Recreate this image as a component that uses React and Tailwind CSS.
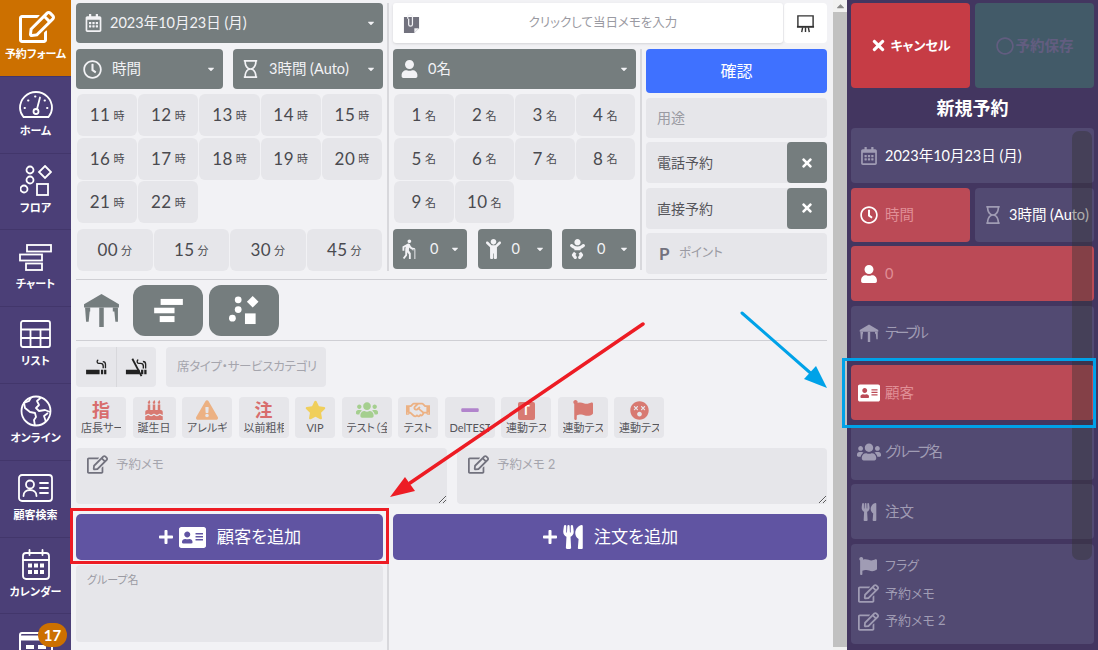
import {
  FaRegCalendarAlt, FaRegClock, FaRegHourglass, FaUser, FaTimes, FaRegEdit, FaStar, FaExclamationTriangle,
  FaBirthdayCake, FaFlag, FaRegHandshake, FaUtensils, FaUsers, FaAddressCard, FaPlus,
  FaDizzy, FaMinus, FaChild, FaBaby, FaCaretDown, FaCaretUp, FaRegCircle,
} from "react-icons/fa";
import { MdElderly } from "react-icons/md";

const TableIcon = ({ className }) => (
  <svg viewBox="0 0 36 33" className={className} fill="currentColor">
    <path d="M18 1 35 11v3H1v-3z" />
    <path d="M2 14h5v4H6.500L5.500 28H3zM29 14h5v14h-2.500l-1-10H29zM15.800 14h4.400v19h-4.400z" />
  </svg>
);

const GanttIcon = ({ className, outline }) => (
  <svg viewBox="0 0 33 27" className={className} fill={outline ? "none" : "currentColor"} stroke={outline ? "currentColor" : "none"} strokeWidth={outline ? 1.800 : 0}>
    <rect x="8" y="1" width="24" height="6.500" />
    <rect x="1" y="10.500" width="22" height="6" />
    <rect x="7" y="19.500" width="16" height="6.500" />
  </svg>
);

const FloorIcon = ({ className, outline }) => (
  <svg viewBox="0 0 32 31" className={className} fill={outline ? "none" : "currentColor"} stroke={outline ? "currentColor" : "none"} strokeWidth={outline ? 1.800 : 0}>
    <circle cx="10" cy="5" r="3.500" />
    <circle cx="10" cy="15" r="3.500" />
    <circle cx="4" cy="24" r="3.500" />
    <path d="M25 1l6 6-6 6-6-6z" />
    <rect x="17" y="19" width="11" height="11" />
  </svg>
);

const GaugeIcon = ({ className }) => (
  <svg viewBox="0 0 34 28" className={className} fill="none" stroke="currentColor" strokeWidth="1.800" strokeLinecap="round">
    <path d="M4.500 27C2.500 24.500 1 21.500 1 18A16 16 0 0 1 33 18C33 21.500 31.500 24.500 29.500 27Z" />
    <circle cx="17" cy="21.500" r="2.500" />
    <path d="M18 19 21 7.500M5.500 18h.5M9 10.500h.5M16 6.500h.5M25.500 10.500h.5M28 18h.5" />
  </svg>
);

const ListIcon = ({ className }) => (
  <svg viewBox="0 0 31 28" className={className} fill="none" stroke="currentColor" strokeWidth="1.800">
    <rect x="1" y="1" width="29" height="26" rx="2" />
    <path d="M1 9.500h29M1 18h29M10.500 9.500V27M20.500 9.500V27" />
  </svg>
);

const GlobeIcon = ({ className }) => (
  <svg viewBox="0 0 32 32" className={className} fill="none" stroke="currentColor" strokeWidth="1.800" strokeLinejoin="round">
    <circle cx="16" cy="16" r="14.500" />
    <path d="M11 2.500 9 6l-5 2 1 5 5 4 5 1 1 4-2 3 1 6M21 2.500 17 6l2 4-3 3 3 3 6-1 5 2M26 27l-2-6 4-3" />
  </svg>
);

const CardIcon = ({ className }) => (
  <svg viewBox="0 0 35 28" className={className} fill="none" stroke="currentColor" strokeWidth="1.800" strokeLinecap="round">
    <rect x="1" y="1" width="33" height="26" rx="3" />
    <circle cx="12" cy="10.500" r="4" />
    <path d="M5.500 22c0-4 3-6 6.500-6s6.500 2 6.500 6M22 9h8M22 14h8M22 19h8" />
  </svg>
);

const CalendarIcon = ({ className }) => (
  <svg viewBox="0 0 28 31" className={className} fill="none" stroke="currentColor" strokeWidth="1.800" strokeLinecap="round">
    <rect x="1" y="4" width="26" height="26" rx="3" />
    <path d="M1 11h26M7.500 1v5M20.500 1v5" />
    <path stroke="none" fill="currentColor" d="M6 14.500h4v4H6zM12 14.500h4v4h-4zM18 14.500h4v4h-4zM6 21h4v4H6zM12 21h4v4h-4zM18 21h4v4h-4z" />
  </svg>
);

const BookingIcon = ({ className }) => (
  <svg viewBox="0 0 34 30" className={className} fill="none" stroke="currentColor" strokeWidth="2">
    <rect x="1" y="1" width="32" height="28" rx="2" />
    <path d="M1 6h32" strokeWidth="5" />
    <path d="M7 15h8M19 15h8" strokeWidth="4" />
  </svg>
);

const SmokingIcon = ({ className, ban }) => (
  <svg viewBox="0 0 24 20" className={className} fill="none" stroke="currentColor" strokeWidth="1.500">
    <path stroke="none" fill="currentColor" d="M1 13h15v5H1zM17.500 13h2.500v5h-2.500zM21 13h2.500v5H21z" />
    <path d="M20 11.500V9c0-2-1-3-3-3h-2c-2 0-2.500-3-.5-4M22.500 11.500V7c0-2-1-3-3-3" />
    {ban && <path d="M8 1l10 19" stroke="currentColor" strokeWidth="2" />}
  </svg>
);

const MemoIcon = ({ className }) => (
  <svg viewBox="0 0 18 20" className={className} fill="none">
    <path fill="#72727e" d="M1 3h16v12l-5 5H1z" />
    <path fill="#f2f2f5" d="M12 20v-5h5z" />
    <path d="M5 5V3c0-3 5-3 5 0v8c0 2.500-4 2.500-4 0V5" stroke="#f2f2f5" strokeWidth="1.300" />
  </svg>
);

const BoardIcon = ({ className }) => (
  <svg viewBox="0 0 20 20" className={className} fill="none" stroke="#333" strokeWidth="1.500">
    <path d="M2 13V2h16v11" />
    <path d="M1 13.500h18" strokeWidth="2" />
    <path d="M6 19l1-5M10 19v-5M14 19l-1-5" />
  </svg>
);

const nav = [
  { label: "予約フォーム", icon: <FaRegEdit className="w-[36px] h-[36px] ml-[3px]" />, active: true },
  { label: "ホーム", icon: <GaugeIcon className="w-[34px] h-[28px]" /> },
  { label: "フロア", icon: <FloorIcon className="w-[32px] h-[31px]" outline /> },
  { label: "チャート", icon: <GanttIcon className="w-[33px] h-[27px]" outline /> },
  { label: "リスト", icon: <ListIcon className="w-[31px] h-[28px]" /> },
  { label: "オンライン", icon: <GlobeIcon className="w-[32px] h-[32px]" /> },
  { label: "顧客検索", icon: <CardIcon className="w-[35px] h-[28px]" /> },
  { label: "カレンダー", icon: <CalendarIcon className="w-[28px] h-[31px]" /> },
];

const flags = [
  { w: "w-[50px]", icon: <span className="text-[18px] leading-[20px] font-bold text-[#d86d6d]">指</span>, label: "店長サービス" },
  { w: "w-[43px]", icon: <FaBirthdayCake className="w-[20px] h-[20px] text-[#d87a72]" />, label: "誕生日" },
  { w: "w-[50px]", icon: <FaExclamationTriangle className="w-[22px] h-[20px] text-[#ecb183]" />, label: "アレルギー" },
  { w: "w-[50px]", icon: <span className="text-[18px] leading-[20px] font-bold text-[#d86d6d]">注</span>, label: "以前粗相あり" },
  { w: "w-[40px]", icon: <FaStar className="w-[21px] h-[20px] text-[#f0cf5b]" />, label: "VIP", center: true },
  { w: "w-[50px]", icon: <FaUsers className="w-[22px] h-[20px] text-[#a5cf8f]" />, label: "テスト（全員）" },
  { w: "w-[40px]", icon: <FaRegHandshake className="w-[24px] h-[20px] text-[#ecb183]" />, label: "テスト", center: true },
  { w: "w-[50px]", icon: <FaMinus className="w-[18px] h-[20px] text-[#b184cc]" />, label: "DelTEST" },
  { w: "w-[50px]", icon: <span className="flex items-center justify-center w-[17px] h-[18px] mt-[1px] rounded-[2px] bg-[#d87a72] text-white text-[13px] leading-none font-bold">T</span>, label: "連動テスト" },
  { w: "w-[50px]", icon: <FaFlag className="w-[20px] h-[20px] text-[#d87a72]" />, label: "連動テスト" },
  { w: "w-[50px]", icon: <FaDizzy className="w-[19px] h-[19px] text-[#d87a72]" />, label: "連動テスト" },
];

function Select({ icon, label, className = "" }) {
  return (
    <div className={`flex items-center h-[40px] shrink-0 rounded-[4px] bg-[#757d7e] text-[#f2f2f5] text-[14.500px] ${className}`}>
      {icon}
      <span className="flex-1 whitespace-nowrap">{label}</span>
      <FaCaretDown className="w-[10px] h-[10px] mr-[7px]" />
    </div>
  );
}

function Tile({ n, unit }) {
  return (
    <div className="flex items-center justify-center h-[42px] rounded-[6px] bg-[#e6e6ea] text-[#4a4a4f]">
      <span className="text-[17px] tracking-[0.5px]">{n}</span>
      <span className="text-[11px] ml-[3px] mt-[2px]">{unit}</span>
    </div>
  );
}

function SideRow({ icon, label, muted, danger, className = "h-[55px]", labelClass = "" }) {
  return (
    <div className={`flex items-center rounded-[4px] ${danger ? "bg-[#bb4a56]" : "bg-[#524a72]"} ${className}`}>
      <span className={`flex justify-center w-[33px] ml-[1px] ${danger ? "text-white" : "text-[#a09cb4]"}`}>{icon}</span>
      <span className={`text-[14.500px] whitespace-nowrap ${muted ? (danger ? "text-[#e08f96]" : "text-[#a09cb4]") : "text-white"} ${labelClass}`}>{label}</span>
    </div>
  );
}

export default function App() {
  return (
    <div className="relative flex w-[1098px] h-[650px] overflow-hidden bg-[#f2f2f5] font-[Lato,'Noto_Sans_CJK_JP',sans-serif] [font-feature-settings:'palt']">
      {/* Left nav */}
      <aside className="w-[71px] shrink-0 bg-[#4b3f77] text-white">
        {nav.map((item) => (
          <div
            key={item.label}
            className={`flex flex-col items-center h-[76.800px] pt-[8px] border-b border-[#42366b] ${item.active ? "bg-[#cc7000]" : ""}`}
          >
            <div className="flex items-center justify-center h-[38px]">{item.icon}</div>
            <span className="text-[11px] leading-[16px] font-bold whitespace-nowrap">{item.label}</span>
          </div>
        ))}
        <div className="relative flex justify-center pt-[18px]">
          <BookingIcon className="w-[34px] h-[30px]" />
          <span className="absolute top-[9px] left-[38px] flex items-center justify-center w-[29px] h-[24px] rounded-full bg-[#cc7000] text-[15px] font-bold">17</span>
        </div>
      </aside>

      {/* Form */}
      <main className="w-[762px] shrink-0 pl-[5px] pr-[6px] pt-[3px]">
        <div className="flex h-[272px]">
          <div className="w-[307px] shrink-0 flex flex-col">
            <Select icon={<FaRegCalendarAlt className="w-[17px] h-[18px] mx-[8px] ml-[9px]" />} label="2023年10月23日 (月)" />
            <div className="flex gap-[10px] mt-[6px]">
              <Select className="w-[147px]" icon={<FaRegClock className="w-[19px] h-[19px] mx-[7px] mr-[10px]" />} label="時間" />
              <Select className="w-[150px]" icon={<FaRegHourglass className="w-[15px] h-[18px] mx-[10px] mr-[11px]" />} label="3時間 (Auto)" />
            </div>
            <div className="grid grid-cols-5 gap-x-[1px] gap-y-[1.500px] mt-[5px] px-[1px]">
              {[11, 12, 13, 14, 15, 16, 17, 18, 19, 20, 21, 22].map((h) => (
                <Tile key={h} n={h} unit="時" />
              ))}
            </div>
            <div className="grid grid-cols-4 gap-x-[1px] mt-[6px] px-[1px]">
              {["00", "15", "30", "45"].map((m) => (
                <Tile key={m} n={m} unit="分" />
              ))}
            </div>
          </div>
          <div className="w-[2px] h-[268px] mx-[4px] shrink-0 bg-[#d8d8dc]" />
          <div className="flex-1 flex flex-col">
            <div className="flex gap-[1px] h-[40px] shrink-0">
              <div className="relative flex-1 flex items-center justify-center pl-[30px] bg-white rounded-[3px] shadow-sm text-[12.500px] text-[#9a9aa2]">
                <MemoIcon className="absolute left-[10px] w-[17px] h-[19px]" />
                クリックして当日メモを入力
              </div>
              <div className="flex items-center justify-center w-[43px] bg-white rounded-[4px]">
                <BoardIcon className="w-[19px] h-[19px]" />
              </div>
            </div>
            <div className="flex mt-[6px]">
              <div className="w-[243px] shrink-0">
                <Select icon={<FaUser className="w-[17px] h-[18px] mx-[8px] mr-[10px]" />} label="0名" />
                <div className="grid grid-cols-4 gap-x-[1px] gap-y-[1.500px] mt-[5px] px-[1px]">
                  {[1, 2, 3, 4, 5, 6, 7, 8, 9, 10].map((p) => (
                    <Tile key={p} n={p} unit="名" />
                  ))}
                </div>
                <div className="flex justify-between mt-[6px]">
                  <Select className="w-[74px]" icon={<MdElderly className="w-[22px] h-[24px] mx-[4px] mr-[11px]" />} label="0" />
                  <Select className="w-[74px]" icon={<FaChild className="w-[17px] h-[20px] mx-[7px] mr-[10px]" />} label="0" />
                  <Select className="w-[74px]" icon={<FaBaby className="w-[17px] h-[20px] mx-[7px] mr-[11px]" />} label="0" />
                </div>
              </div>
              <div className="w-[2px] h-[221px] mx-[4px] shrink-0 bg-[#d8d8dc]" />
              <div className="w-[181px] flex flex-col gap-[4.500px]">
                <div className="flex items-center justify-center h-[44px] rounded-[4px] bg-[#3f71ff] text-white text-[16px]">確認</div>
                <div className="flex items-center h-[40px] pl-[11px] rounded-[4px] bg-[#e6e6ea] text-[#9a9aa2] text-[14px]">用途</div>
                <div className="flex items-center h-[41px] pl-[11px] rounded-[4px] bg-[#e6e6ea] text-[#55555a] text-[14px]">
                  <span className="flex-1">電話予約</span>
                  <span className="flex items-center justify-center w-[40px] h-[41px] rounded-[4px] bg-[#757d7e]"><FaTimes className="w-[14px] h-[14px] text-white" /></span>
                </div>
                <div className="flex items-center h-[41px] pl-[11px] rounded-[4px] bg-[#e6e6ea] text-[#55555a] text-[14px]">
                  <span className="flex-1">直接予約</span>
                  <span className="flex items-center justify-center w-[40px] h-[41px] rounded-[4px] bg-[#757d7e]"><FaTimes className="w-[14px] h-[14px] text-white" /></span>
                </div>
                <div className="flex items-center h-[41px] pl-[13px] rounded-[4px] bg-[#e6e6ea] text-[#9a9aa2] text-[12.500px]">
                  <span className="w-[20px] text-[17px] font-bold text-[#72727e]">P</span>ポイント
                </div>
              </div>
            </div>
          </div>
        </div>

        {/* Layout type */}
        <div className="flex items-center gap-[6px] h-[62px] mt-[4px] border-t border-b border-[#cfcfd4]">
          <span className="flex items-center justify-center w-[51px] h-[51px] text-[#757d7e]"><TableIcon className="w-[37px] h-[34px]" /></span>
          <span className="flex items-center justify-center w-[70px] h-[51px] rounded-[12px] bg-[#757d7e] text-white"><GanttIcon className="w-[31px] h-[25px]" /></span>
          <span className="flex items-center justify-center w-[70px] h-[51px] rounded-[12px] bg-[#757d7e] text-white"><FloorIcon className="w-[32px] h-[30px]" /></span>
        </div>

        <div className="flex gap-[10px] mt-[6px]">
          <div className="flex h-[40px] w-[80px] rounded-[4px] bg-[#e6e6ea] text-[#222]">
            <span className="flex-1 flex items-center justify-center border-r border-[#d8d8dc]"><SmokingIcon className="w-[22px] h-[18px]" /></span>
            <span className="flex-1 flex items-center justify-center"><SmokingIcon ban className="w-[22px] h-[20px]" /></span>
          </div>
          <div className="flex items-center h-[40px] w-[160px] pl-[11px] rounded-[4px] bg-[#e6e6ea] text-[#a5a5ad] text-[12.500px] tracking-[-0.3px] whitespace-nowrap">席タイプ・サービスカテゴリ</div>
        </div>

        <div className="flex gap-[6.500px] mt-[10px]">
          {flags.map((f, i) => (
            <div key={i} className={`${f.w} h-[41px] rounded-[4px] bg-[#e6e6ea] flex flex-col items-center pt-[2px]`}>
              <div className="flex items-center justify-center h-[22px]">{f.icon}</div>
              <div className={`self-stretch mx-[5px] overflow-hidden whitespace-nowrap text-[11px] leading-[14px] text-[#55555a] ${f.center ? "text-center" : ""}`}>{f.label}</div>
            </div>
          ))}
        </div>

        <div className="flex gap-[10px] mt-[10px]">
          <div className="relative w-[371px] h-[56px]">
            <FaRegEdit className="absolute left-[11px] top-[7px] w-[21px] h-[19px] text-[#72727e]" />
            <textarea readOnly placeholder="予約メモ" className="w-full h-full block pl-[40px] pt-[8px] rounded-[4px] bg-[#e6e6ea] text-[12.500px] placeholder:text-[#a5a5ad] outline-none" />
          </div>
          <div className="relative flex-1 h-[56px]">
            <FaRegEdit className="absolute left-[11px] top-[7px] w-[21px] h-[19px] text-[#72727e]" />
            <textarea readOnly placeholder="予約メモ 2" className="w-full h-full block pl-[40px] pt-[8px] rounded-[4px] bg-[#e6e6ea] text-[12.500px] placeholder:text-[#a5a5ad] outline-none" />
          </div>
        </div>

        <div className="flex mt-[10px]">
          <div className="w-[307px] shrink-0">
            <div className="flex items-center justify-center h-[46px] rounded-[5px] bg-[#6054a2] text-white text-[17.200px]">
              <FaPlus className="w-[16px] h-[16px] mr-[5px]" />
              <FaAddressCard className="w-[27px] h-[27px] mr-[11px]" />
              顧客を追加
            </div>
            <div className="h-[77px] mt-[5px] px-[11px] pt-[7px] rounded-[4px] bg-[#e6e6ea] text-[11px] text-[#9a9aa2]">グループ名</div>
          </div>
          <div className="w-[2px] mx-[4px] shrink-0 mt-[46px] h-[100px] bg-[#d8d8dc]" />
          <div className="flex-1 flex items-center justify-center h-[46px] rounded-[5px] bg-[#6054a2] text-white text-[17.200px]">
            <FaPlus className="w-[16px] h-[16px] mr-[5px]" />
            <FaUtensils className="w-[20px] h-[24px] mr-[11px]" />
            注文を追加
          </div>
        </div>
      </main>

      {/* Page scrollbar */}
      <div className="w-[14px] shrink-0 flex flex-col items-center bg-[#f1f1f1]">
        <FaCaretUp className="w-[9px] h-[12px] text-[#8a8a8a]" />
        <div className="w-full h-[635px] bg-[#c1c1c1]" />
      </div>

      {/* Summary panel */}
      <aside className="relative flex-1 flex flex-col pl-[4px] pr-[4px] pt-[3px] bg-[#433660]">
        <div className="flex gap-[5px] h-[85px]">
          <div className="flex-1 flex items-center justify-center rounded-[4px] bg-[#c63c45] text-white text-[13px] font-bold">
            <FaTimes className="w-[17px] h-[17px] mr-[3px]" />キャンセル
          </div>
          <div className="flex-1 flex items-center justify-center rounded-[4px] bg-[#425a68] text-[#625d80] text-[14.500px] font-bold">
            <FaRegCircle className="w-[18px] h-[18px] mr-[2px]" />予約保存
          </div>
        </div>
        <div className="h-[40px] flex items-center justify-center text-white text-[18px] font-bold">新規予約</div>
        <div className="flex flex-col gap-[4.500px]">
          <SideRow icon={<FaRegCalendarAlt className="w-[16px] h-[18px]" />} label="2023年10月23日 (月)" />
          <div className="flex gap-[5px]">
            <SideRow className="h-[54px] flex-1" danger muted icon={<FaRegClock className="w-[18px] h-[18px]" />} label="時間" />
            <SideRow className="h-[54px] flex-1" icon={<FaRegHourglass className="w-[14px] h-[18px]" />} label="3時間 (Auto)" />
          </div>
          <SideRow danger muted icon={<FaUser className="w-[16px] h-[18px]" />} label="0" />
          <SideRow muted icon={<TableIcon className="w-[20px] h-[18px]" />} label="テーブル" labelClass="tracking-[-3px]" />
          <SideRow danger muted icon={<FaAddressCard className="w-[22px] h-[20px]" />} label="顧客" />
          <SideRow muted icon={<FaUsers className="w-[24px] h-[20px]" />} label="グループ名" labelClass="tracking-[-2.500px]" />
          <SideRow muted icon={<FaUtensils className="w-[16px] h-[18px]" />} label="注文" />
          <div className="flex flex-col justify-center gap-[8px] h-[100px] rounded-[4px] bg-[#524a72] text-[#a09cb4] text-[13px]">
            <div className="flex items-center"><span className="flex justify-center w-[34px]"><FaFlag className="w-[20px] h-[18px]" /></span>フラグ</div>
            <div className="flex items-center"><span className="flex justify-center w-[34px]"><FaRegEdit className="w-[21px] h-[19px]" /></span>予約メモ</div>
            <div className="flex items-center"><span className="flex justify-center w-[34px]"><FaRegEdit className="w-[21px] h-[19px]" /></span>予約メモ 2</div>
          </div>
        </div>
        <div className="absolute left-[225px] top-[131px] w-[20px] h-[429px] rounded-[7px] bg-[#333]/40" />
      </aside>

      {/* Annotations */}
      <div className="absolute left-[70px] top-[508px] w-[319px] h-[56px] border-[3px] border-[#ed1c24]" />
      <div className="absolute left-[842px] top-[358px] w-[254px] h-[70px] border-[3.500px] border-[#00a2e8]" />
      <svg className="absolute inset-0 w-[1098px] h-[650px] pointer-events-none" viewBox="0 0 1098 650">
        <line x1="643" y1="324" x2="410" y2="483" stroke="#ed1c24" strokeWidth="3.500" strokeLinecap="round" />
        <path d="M390 497 L405 477 L415 491 Z" fill="#ed1c24" />
        <line x1="742" y1="313" x2="815" y2="377" stroke="#00a2e8" strokeWidth="3" strokeLinecap="round" />
        <path d="M827 388 L804 379 L816 366 Z" fill="#00a2e8" />
      </svg>
    </div>
  );
}
